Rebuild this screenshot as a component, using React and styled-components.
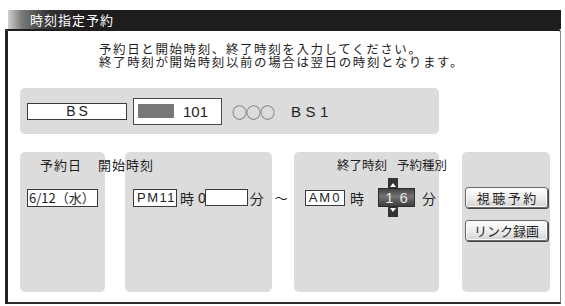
import React from "react";
import styled, { createGlobalStyle } from "styled-components";

const GlobalStyle = createGlobalStyle`
  html, body { margin: 0; padding: 0; background: #ffffff; }
  body {
    font-family: "Noto Sans CJK JP", "Noto Sans", sans-serif;
    color: #1e1e1e;
  }
  * { box-sizing: border-box; }
`;

const jp = `"Noto Sans CJK JP", "Noto Sans", sans-serif`;
const latin = `"Liberation Sans", "Noto Sans CJK JP", sans-serif`;

const Screen = styled.div`
  width: 565px;
  height: 306px;
  padding-top: 10px;
  overflow: hidden;
`;

const TitleTab = styled.div`
  margin-left: 8px;
  width: 553px;
  height: 19px;
  padding-left: 22px;
  background: linear-gradient(90deg, #cfcfcf 0px, #7a7a7a 14px, #363436 40px, #1f1d1e 70px, #1f1d1e 100%);
  color: #ffffff;
  font-family: ${jp};
  font-size: 13px;
  letter-spacing: 1px;
  line-height: 19px;
`;

const Dialog = styled.div`
  margin-left: 5px;
  width: 556px;
  height: 275px;
  border-top: 2px solid #1f1d1e;
  border-left: 3px solid #222;
  border-bottom: 2px solid #2c2c2c;
  border-right: 1px solid #8a8a8a;
  border-top-right-radius: 3px;
  padding: 11px 0 0 12px;
`;

const Instruction = styled.div`
  padding-left: 79px;
  display: flex;
  flex-direction: column;
`;

const InstructionLine = styled.div`
  height: 13px;
  overflow: visible;
  font-family: ${jp};
  font-size: 12.5px;
  letter-spacing: 1.6px;
  line-height: 13px;
  color: #1e1e1e;
  white-space: nowrap;
`;

const ChannelPanel = styled.div`
  margin-top: 20px;
  width: 419px;
  height: 46px;
  padding-left: 7px;
  background: #dcdcdc;
  border-radius: 5px;
  display: flex;
  align-items: center;
`;

const BandField = styled.div`
  width: 100px;
  height: 17px;
  border: 1px solid #3a3a3a;
  background: #fff;
  text-align: center;
  font-family: ${latin};
  font-size: 14px;
  letter-spacing: 3px;
  line-height: 15px;
  padding-left: 3px;
`;

const ChannelField = styled.div`
  margin-left: 6px;
  width: 89px;
  height: 27px;
  border: 1px solid #4a4a4a;
  background: #fff;
  display: flex;
  align-items: center;
  padding-left: 4px;
`;

const ColorChip = styled.div`
  width: 36px;
  height: 14px;
  background: #777;
`;

const ChannelNumber = styled.span`
  margin-left: 9px;
  font-family: ${latin};
  font-size: 15px;
`;

const ServiceMark = styled.span`
  margin-left: 10px;
  font-family: ${jp};
  font-size: 15px;
  color: #555;
  letter-spacing: -1px;
`;

const ServiceName = styled.span`
  margin-left: 17px;
  font-family: ${latin};
  font-size: 15px;
  letter-spacing: 4.5px;
`;

const BottomGrid = styled.div`
  margin-top: 18px;
  width: 530px;
  height: 140px;
  display: grid;
  grid-template-columns: 85px 20px 147px 22px 145px 23px 88px;
  grid-template-rows: 27px 37px 30px 1fr;
`;

const Panel = styled.div`
  grid-row: 1 / -1;
  grid-column: ${(p) => p.$col};
  background: #dcdcdc;
  border-radius: 5px;
`;

const LabelGroup = styled.div`
  grid-row: 1;
  grid-column: ${(p) => p.$cols};
  padding-left: ${(p) => p.$indent}px;
  padding-top: 6px;
  display: flex;
  gap: ${(p) => p.$gap}px;
  white-space: nowrap;
`;

const Label = styled.span`
  font-family: ${jp};
  font-size: ${(p) => p.$size || 13}px;
  letter-spacing: ${(p) => p.$ls ?? 1}px;
  line-height: 13px;
`;

const FieldRow = styled.div`
  grid-row: 2;
  grid-column: ${(p) => p.$col};
  padding-left: ${(p) => p.$indent || 0}px;
  display: flex;
  align-items: center;
  white-space: nowrap;
`;

const ValueBox = styled.div`
  width: ${(p) => p.$w}px;
  height: ${(p) => p.$h}px;
  margin-left: ${(p) => p.$ml || 0}px;
  border: 1px solid #3a3a3a;
  background: #fff;
  overflow: hidden;
  white-space: nowrap;
  font-family: ${(p) => (p.$latin ? latin : jp)};
  font-size: 13px;
  letter-spacing: ${(p) => p.$ls || 0}px;
  line-height: ${(p) => p.$h - 2}px;
  text-align: ${(p) => (p.$center ? "center" : "left")};
  padding-left: ${(p) => p.$pl || 0}px;
`;

const Unit = styled.span`
  margin-left: ${(p) => p.$ml || 0}px;
  font-family: ${jp};
  font-size: 14px;
  line-height: 16px;
`;

const Digit = styled.span`
  margin-left: 4px;
  font-family: ${latin};
  font-size: 14px;
  line-height: 16px;
`;

const Tilde = styled.div`
  grid-row: 2;
  grid-column: 4;
  justify-self: center;
  align-self: center;
  font-family: ${jp};
  font-size: 13px;
  margin-left: -4px;
`;

const Spinner = styled.div`
  position: relative;
  margin-left: 14px;
  width: 37px;
  height: 19px;
  border: 1px solid #2c2c2c;
  background: linear-gradient(180deg, #444 0%, #747474 45%, #626262 60%, #3e3e3e 100%);
  color: #e6e6e6;
  font-family: ${latin};
  font-size: 15px;
  letter-spacing: 6px;
  padding-left: 6px;
  line-height: 17px;
  text-align: center;
`;

const SpinTab = styled.div`
  position: absolute;
  left: 9px;
  ${(p) => (p.$dir === "up" ? "top: -11px;" : "bottom: -11px;")}
  width: 10px;
  height: 10px;
  background: #333;
  &::after {
    content: "";
    position: absolute;
    left: 2px;
    ${(p) => (p.$dir === "up" ? "bottom: 1px;" : "top: 1px;")}
    border-left: 3px solid transparent;
    border-right: 3px solid transparent;
    ${(p) => (p.$dir === "up" ? "border-bottom: 4px solid #fff;" : "border-top: 4px solid #fff;")}
  }
`;

const ButtonCell = styled.div`
  grid-row: ${(p) => p.$row};
  grid-column: 7;
  padding-left: 3px;
  align-self: ${(p) => (p.$row === 2 ? "center" : "start")};
  margin-top: ${(p) => (p.$row === 2 ? 0 : 4)}px;
`;

const ActionButton = styled.button`
  display: block;
  width: 83px;
  height: 21px;
  padding: 0 0 0 ${(p) => p.$ls || 0}px;
  border: 1px solid #6a6a6a;
  border-radius: 3px;
  box-shadow: 1px 1px 0 #444, inset 0 0 0 1px #fafafa;
  background: linear-gradient(180deg, #ffffff 0%, #ececec 55%, #d2d2d2 100%);
  color: #222;
  font-family: ${jp};
  font-size: 13px;
  letter-spacing: ${(p) => p.$ls || 0}px;
  line-height: 19px;
`;

export default function App() {
  return (
    <>
      <GlobalStyle />
      <Screen>
        <TitleTab>時刻指定予約</TitleTab>
        <Dialog>
          <Instruction>
            <InstructionLine>予約日と開始時刻、終了時刻を入力してください。</InstructionLine>
            <InstructionLine>終了時刻が開始時刻以前の場合は翌日の時刻となります。</InstructionLine>
          </Instruction>

          <ChannelPanel>
            <BandField>BS</BandField>
            <ChannelField>
              <ColorChip />
              <ChannelNumber>101</ChannelNumber>
            </ChannelField>
            <ServiceMark>○○○</ServiceMark>
            <ServiceName>BS1</ServiceName>
          </ChannelPanel>

          <BottomGrid>
            <Panel $col={1} />
            <Panel $col={3} />
            <Panel $col={5} />
            <Panel $col={7} />

            <LabelGroup $cols="1 / 4" $indent={20} $gap={16}>
              <Label>予約日</Label>
              <Label>開始時刻</Label>
            </LabelGroup>
            <LabelGroup $cols="5 / 8" $indent={43} $gap={10}>
              <Label $size={12.5} $ls={0}>終了時刻</Label>
              <Label $size={12.5} $ls={0}>予約種別</Label>
            </LabelGroup>

            <FieldRow $col={1} $indent={7}>
              <ValueBox $w={71} $h={18} $pl={1}>6/12（水）</ValueBox>
            </FieldRow>

            <FieldRow $col={3} $indent={8}>
              <ValueBox $w={44} $h={18} $latin $ls={1.5} $pl={3}>PM11</ValueBox>
              <Unit $ml={3}>時</Unit>
              <Digit>0</Digit>
              <ValueBox $w={43} $h={17} $ml={-1} />
              <Unit $ml={2}>分</Unit>
            </FieldRow>

            <Tilde>～</Tilde>

            <FieldRow $col={5} $indent={11}>
              <ValueBox $w={40} $h={16} $latin $ls={2} $center>AM0</ValueBox>
              <Unit $ml={5}>時</Unit>
              <Spinner>
                <SpinTab $dir="up" />
                16
                <SpinTab $dir="down" />
              </Spinner>
              <Unit $ml={7}>分</Unit>
            </FieldRow>

            <ButtonCell $row={2}>
              <ActionButton $ls={2.5}>視聴予約</ActionButton>
            </ButtonCell>
            <ButtonCell $row={3}>
              <ActionButton>リンク録画</ActionButton>
            </ButtonCell>
          </BottomGrid>
        </Dialog>
      </Screen>
    </>
  );
}
